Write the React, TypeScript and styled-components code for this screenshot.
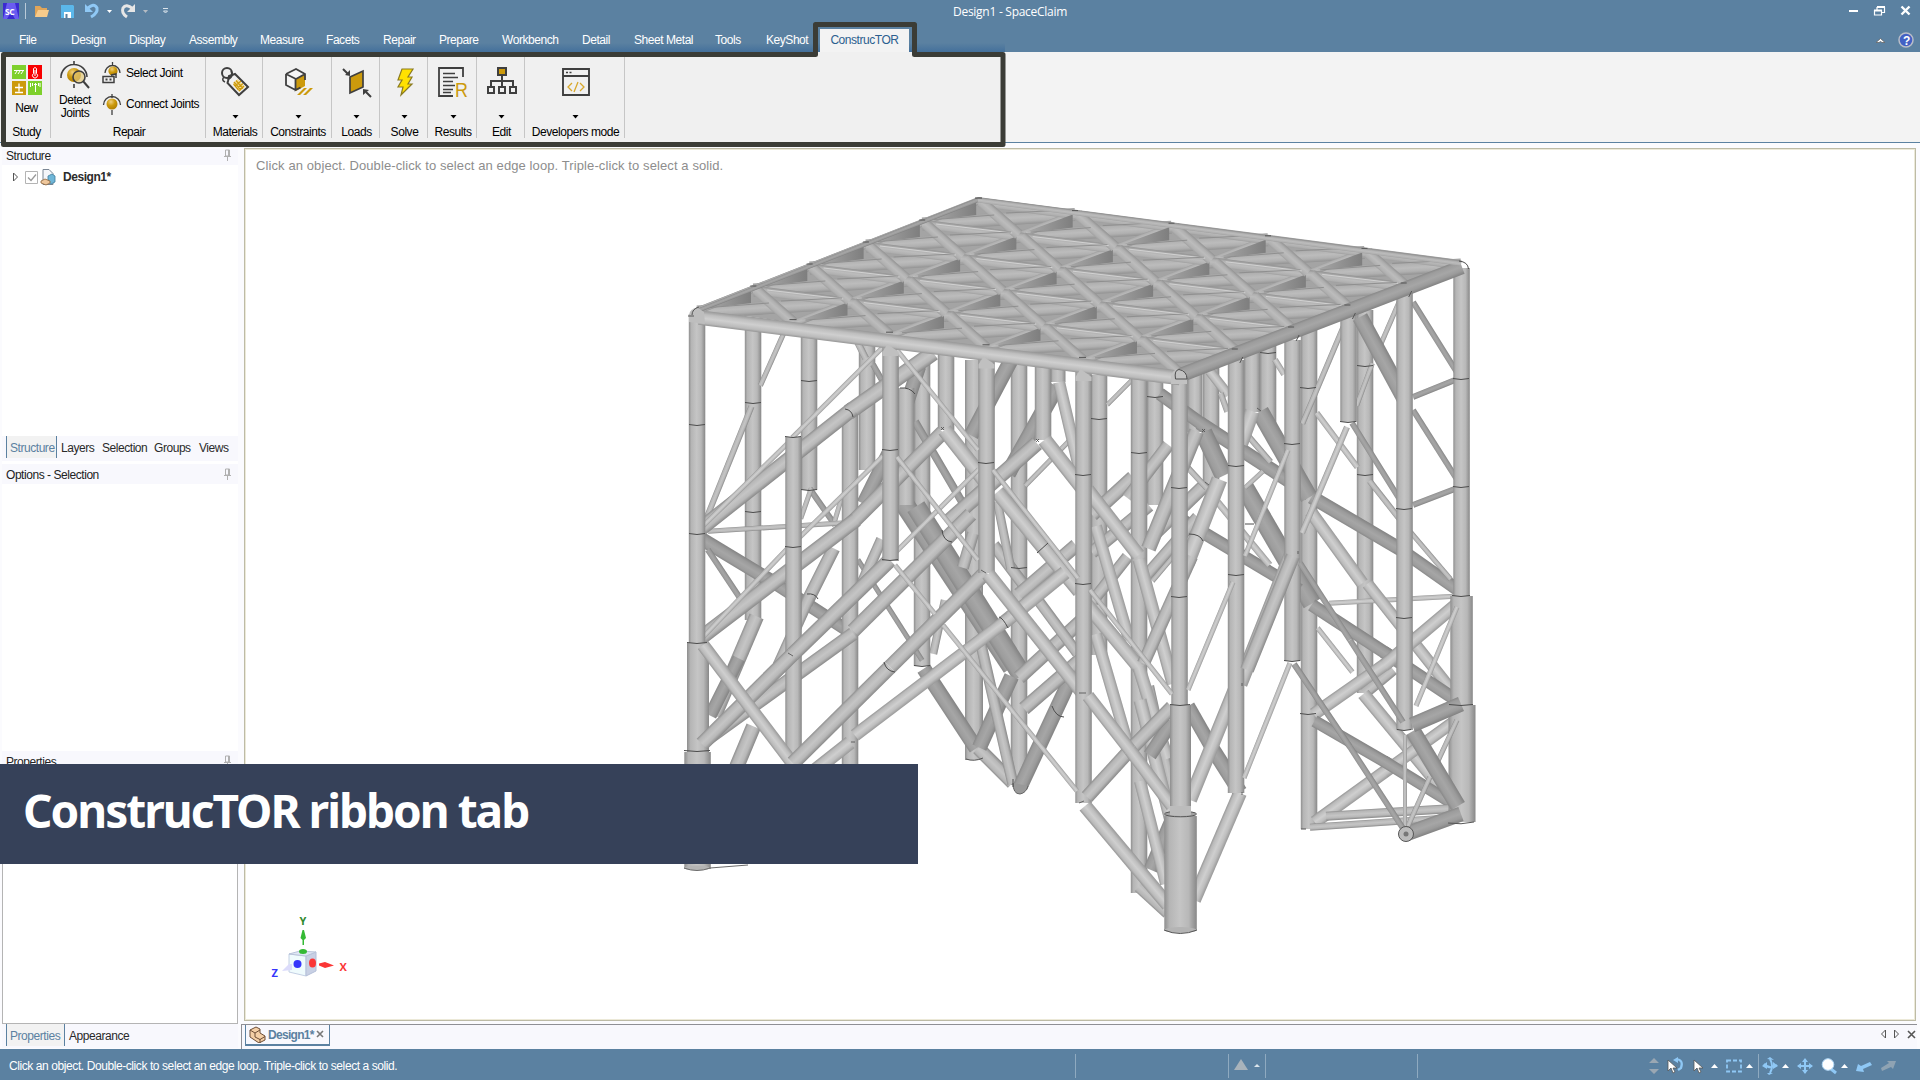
import React from "react";
import styled, { createGlobalStyle } from "styled-components";

const C = {
  blue: "#5b81a1",
  ribbon: "#f0f0f0",
  panel: "#f8f8fd",
  frame: "#3b3c36",
  banner: "#364159",
  gold: "#cc9a0c",
  ink: "#3f3f3f",
};

const GlobalStyle = createGlobalStyle`
  * { box-sizing: border-box; }
  body { margin: 0; background: #f8f8fd; }
  svg { display: block; flex: none; }
`;

const Window = styled.div`
  position: relative;
  width: 1920px;
  height: 1080px;
  display: flex;
  flex-direction: column;
  overflow: hidden;
  font: 12px/14px "Liberation Sans", Arial, sans-serif;
  letter-spacing: -0.45px;
  color: #222;
  background: #fbfbfe;
  white-space: nowrap;
`;

const TitleBar = styled.header`
  height: 26px;
  flex: none;
  display: grid;
  grid-template-columns: 953px 1fr 91px;
  background: ${C.blue};
  color: #fff;
`;
const TitleText = styled.div`
  padding-top: 5px;
  font: 12px/14px "Open Sans", "Noto Sans", sans-serif;
  letter-spacing: -0.27px;
`;
const TabStrip = styled.nav`
  height: 26px;
  flex: none;
  display: flex;
  align-items: stretch;
  background: linear-gradient(${C.blue} 65%, #44709b) 0 0 / 1005px 100% no-repeat, ${C.blue};
  color: #fff;
  padding-left: 19px;
`;
const Tab = styled.div<{ $w: number; $gap?: number }>`
  width: ${(p) => p.$w}px;
  margin-right: ${(p) => p.$gap ?? 23}px;
  padding-top: 7px;
`;
const ActiveTab = styled.div`
  width: 89px;
  margin: 3px auto 0 -10px;
  padding-top: 4px;
  text-align: center;
  background: #f3f3f3;
  color: #2c5f8f;
`;
const TabExtras = styled.div`
  width: 60px;
  padding-top: 6px;
`;

const Ribbon = styled.section`
  height: 91px;
  flex: none;
  display: flex;
  padding: 5px 0 4px 5px;
  border-bottom: 1px solid ${C.blue};
  background: linear-gradient(90deg, ${C.ribbon} 1003px, #f3f3f3 1003px);
  color: #000;
`;
const Group = styled.div<{ $w: number; $shift?: number }>`
  width: ${(p) => p.$w}px;
  height: 81px;
  padding: ${(p) => ((p.$shift ?? 2) < 0 ? "0 2px 0 0" : "0 0 0 2px")};
  border-right: 1px solid #c6c6c6;
  display: flex;
  flex-direction: column;
  align-items: center;
  justify-content: space-between;
`;
const GroupLabel = styled.div`
  height: 13px;
  line-height: 14px;
`;
const IconSlot = styled.div`
  height: 52px;
  padding-top: 9px;
`;
const StudySlot = styled.div`
  height: 60px;
  padding-top: 8px;
  display: flex;
  flex-direction: column;
  align-items: center;
  gap: 6px;
`;
const Big = styled.div`
  display: flex;
  flex-direction: column;
  align-items: center;
  gap: 4px;
  text-align: center;
  line-height: 13px;
`;
const RepairBody = styled.div`
  display: flex;
  width: 100%;
  padding: 3px 0 0 6px;
`;
const JointList = styled.div`
  display: flex;
  flex-direction: column;
  gap: 3px;
  margin-top: -1px;
  padding-left: 11px;
`;
const JointItem = styled.div`
  display: flex;
  align-items: center;
  gap: 4px;
  height: 28px;
`;

const Body = styled.main`
  flex: 1;
  display: grid;
  grid-template-columns: 241px 1fr;
  min-height: 0;
`;
const Side = styled.aside`
  display: flex;
  flex-direction: column;
  padding: 6px 3px 0 2px;
`;
const PanelHead = styled.div<{ $h?: number; $top?: number }>`
  height: ${(p) => p.$h ?? 16}px;
  flex: none;
  display: flex;
  justify-content: space-between;
  padding: ${(p) => p.$top ?? 0}px 6px 0 4px;
  background: ${C.panel};
`;
const Pane = styled.div<{ $h: number; $box?: boolean }>`
  height: ${(p) => p.$h}px;
  flex: none;
  background: #fff;
  border: ${(p) => (p.$box ? "1px solid #b4b4b4" : "none")};
`;
const TreeRow = styled.div`
  display: flex;
  align-items: center;
  height: 23px;
  padding-left: 10px;
  font-weight: bold;
  letter-spacing: -0.45px;
  color: #2b2b2b;
`;
const TreeName = styled.span`
  padding-left: 7px;
`;
const BottomTabs = styled.div<{ $h: number }>`
  height: ${(p) => p.$h}px;
  flex: none;
  display: flex;
  padding-left: 4px;
  background: ${C.panel};
`;
const SideTab = styled.div<{ $w: number; $on?: boolean }>`
  width: ${(p) => p.$w}px;
  height: 22px;
  padding: 5px 0 0 ${(p) => (p.$on ? 3 : 4)}px;
  border: solid ${C.blue};
  border-width: ${(p) => (p.$on ? "0 1px" : "0")};
  background: ${(p) => (p.$on ? "#f2f2f2" : "transparent")};
  color: ${(p) => (p.$on ? C.blue : "#2a2a2a")};
`;

const Stage = styled.section`
  display: flex;
  flex-direction: column;
  padding: 5px 0 0 3px;
`;
const Viewport = styled.div`
  width: 1672px;
  height: 873px;
  flex: none;
  border: 1px solid #bdbba6;
  background: #fff;
  box-shadow: inset 0 0 0 1px #ece9d8;
  padding: 9px 0 0 11px;
  position: relative;
`;
const Hint = styled.div`
  color: #8d8d8d;
  font-size: 13px;
  line-height: 15px;
  letter-spacing: 0.1px;
`;
const Scene = styled.svg`
  position: absolute;
  left: -1px;
  top: -1px;
`;
const DocBar = styled.div`
  height: 25px;
  margin: 3px 3px 0 -3px;
  border-top: 1px solid #8f8f95;
  border-left: 1px solid #8f8f95;
  background: ${C.panel};
  display: flex;
  justify-content: space-between;
  padding: 0 0 0 3px;
`;
const DocTab = styled.div`
  width: 85px;
  height: 21px;
  display: flex;
  align-items: center;
  gap: 2px;
  padding-left: 3px;
  border: solid ${C.blue};
  border-width: 0 1px 2px;
  font-weight: bold;
  letter-spacing: -0.7px;
  color: ${C.blue};
`;
const Status = styled.footer`
  height: 31px;
  flex: none;
  display: grid;
  grid-template-columns: 1075px 153px 37px 152px 1fr;
  background: ${C.blue};
  color: #fff;
`;
const StatusCell = styled.div<{ $line?: boolean; $pad?: number }>`
  margin: 5px 0 2px;
  padding: 5px 0 0 ${(p) => p.$pad ?? 9}px;
  letter-spacing: -0.415px;
  border-left: ${(p) => (p.$line ? "1px solid #8faac0" : "none")};
`;
const Banner = styled.div`
  position: absolute;
  left: 0;
  top: 764px;
  width: 918px;
  height: 100px;
  padding: 15px 0 0 23px;
  background: ${C.banner};
  color: #fff;
  font: bold 46px/62px "Noto Sans", "Open Sans", sans-serif;
  letter-spacing: -2px;
`;
const Overlay = styled.svg`
  position: absolute;
  left: 0;
  top: 0;
  pointer-events: none;
`;

/* ---------- 3D model ---------- */

type Tone = 0 | 1 | 2 | 3; // 0 lit, 1 regular, 2 shaded, 3 soft deck bars
type T = [number, number, number, number, number, Tone?];

const tones = [
  ["#969696", "#bababa", "#cfcfcf", "#bebebe", "#989898"],
  ["#8e8e8e", "#b5b5b5", "#c5c5c5", "#b8b8b8", "#888888"],
  ["#888888", "#9c9c9c", "#a6a6a6", "#9b9b9b", "#828282"],
  ["#a0a0a0", "#b0b0b0", "#bcbcbc", "#b0b0b0", "#939393"],
];

const Tube = ({ t, id, extend = 0 }: { t: T; id: string; extend?: number }) => {
  const [ax, ay, bx, by, w, tone = 1] = t;
  const len = Math.hypot(bx - ax, by - ay);
  const e = ax === bx ? 0 : extend;
  const ux = ((bx - ax) / len) * e;
  const uy = ((by - ay) / len) * e;
  const x1 = ax - ux, y1 = ay - uy, x2 = bx + ux, y2 = by + uy;
  let nx = -(by - ay) / len;
  let ny = (bx - ax) / len;
  if (nx < 0) {
    nx = -nx;
    ny = -ny;
  }
  const h = w / 2;
  const c = tones[tone];
  const p = [
    [x1 - nx * h, y1 - ny * h],
    [x2 - nx * h, y2 - ny * h],
    [x2 + nx * h, y2 + ny * h],
    [x1 + nx * h, y1 + ny * h],
  ];
  return (
    <>
      <linearGradient id={id} gradientUnits="userSpaceOnUse" x1={x1 - nx * h} y1={y1 - ny * h} x2={x1 + nx * h} y2={y1 + ny * h}>
        <stop offset="0" stopColor={c[0]} />
        <stop offset=".16" stopColor={c[1]} />
        <stop offset=".48" stopColor={c[2]} />
        <stop offset=".75" stopColor={c[3]} />
        <stop offset="1" stopColor={c[4]} />
      </linearGradient>
      <polygon points={p.map((q) => q.map((v) => v.toFixed(1)).join(",")).join(" ")} fill={`url(#${id})`} />
    </>
  );
};

const back: T[] = [
  [753, 330, 753, 620, 16.5], [809, 337, 809, 490, 16.5], [867, 345, 867, 470, 16.5], [922, 360, 922, 666, 16.5],
  [974, 360, 974, 760, 18], [1019, 365, 1019, 785, 16.5], [1058, 365, 1058, 382, 15], [1099, 375, 1099, 655, 16.5],
  [1155, 375, 1155, 505, 16.5], [1195, 370, 1195, 432, 15], [1211, 365, 1211, 490, 16.5], [1252, 350, 1252, 412, 16.5],
  [1268, 345, 1268, 428, 16.5], [1309, 330, 1309, 829, 16.5], [1365, 310, 1365, 693, 16.5],
  [783, 335, 762, 382, 5], [750, 410, 707, 517, 6], [858, 343, 864, 355, 7], [875, 368, 883, 382, 6, 2],
  [812, 492, 833, 522, 6, 2], [810, 492, 802, 515, 5], [841, 500, 835, 520, 5], [712, 531, 842, 523, 5],
  [918, 370, 898, 430, 14, 2], [895, 440, 865, 500, 14, 2], [917, 425, 965, 507, 8, 2],
  [1010, 362, 973, 432, 15, 2], [1055, 390, 1010, 470, 16, 2], [1067, 443, 1028, 483, 5],
  [905, 505, 1010, 664, 20, 2], [918, 510, 1020, 672, 20, 2],
  [705, 541, 773, 582, 14, 2], [773, 582, 850, 632, 13, 2], [710, 553, 740, 598, 6, 2],
  [755, 620, 716, 712, 15], [752, 730, 737, 766, 15], [712, 712, 737, 662, 13, 2],
  [832, 552, 808, 600, 13], [808, 600, 780, 662, 12], [860, 563, 920, 657, 5, 2], [880, 543, 862, 583, 11],
  [926, 672, 974, 745, 15, 2], [944, 604, 934, 650, 8], [981, 751, 1010, 780, 14], [1010, 680, 981, 744, 15, 2],
  [980, 640, 1012, 780, 11], [1022, 783, 1070, 680, 15, 2], [1022, 675, 1080, 622, 14], [1027, 706, 1080, 660, 14],
  [996, 548, 1032, 596, 12], [1038, 600, 1075, 650, 11], [1022, 592, 1073, 548, 14], [972, 537, 964, 564, 12],
  [998, 505, 1010, 565, 9],
  [1163, 396, 1203, 425, 13, 2], [1203, 425, 1306, 492, 14, 2], [1205, 436, 1222, 472, 18, 2],
  [1262, 415, 1307, 494, 18, 2], [1246, 490, 1310, 600, 19, 2], [1172, 514, 1296, 588, 13, 2],
  [1203, 487, 1150, 538, 14], [1130, 480, 1095, 512, 14], [1132, 380, 1110, 402, 4.5], [1146, 508, 1095, 550, 13],
  [1166, 448, 1130, 495, 13], [1212, 374, 1226, 392, 10, 0], [1222, 397, 1226, 408, 6],
  [1190, 470, 1204, 485, 6], [1250, 438, 1268, 459, 6], [1277, 363, 1282, 371, 6, 0], [1248, 485, 1260, 474, 5],
  [1220, 505, 1267, 562, 7, 0], [1195, 520, 1145, 577, 12], [1125, 560, 1095, 598, 12],
  [1097, 530, 1128, 636, 12, 0], [1097, 638, 1128, 745, 12, 0], [1150, 690, 1172, 790, 10], [1172, 558, 1155, 578, 5],
];
const mid: T[] = [
  [946, 352, 946, 430, 16.5], [906, 388, 906, 505, 16.5], [1043, 365, 1043, 440, 16.5],
  [1139, 378, 1139, 893, 16.5], [1060, 386, 1080, 472, 12, 0],
  [850, 415, 850, 770, 16.5],
  [930, 355, 852, 410, 16], [850, 411, 704, 526, 15], [787, 444, 705, 524, 5, 0],
  [940, 435, 855, 520, 15], [853, 522, 703, 636, 15], [947, 433, 984, 480, 15, 0],
  [1034, 446, 950, 520, 15], [968, 517, 856, 628, 15], [850, 636, 703, 742, 14],
  [1047, 443, 1088, 495, 15, 0], [1090, 493, 1136, 552, 14, 0], [1140, 563, 1172, 680, 13, 0],
  [1000, 495, 1077, 588, 15, 0], [1088, 606, 1137, 665, 14, 0], [1140, 671, 1166, 755, 13, 0],
  [1062, 575, 1007, 620, 14, 0], [1007, 620, 858, 733, 13, 0], [847, 745, 795, 786, 14, 0],
  [1195, 435, 1150, 545, 15], [1218, 483, 1188, 560, 16, 0], [1251, 415, 1242, 440, 15, 0], [1190, 560, 1145, 660, 13],
  [1141, 704, 1172, 825, 13, 0], [1152, 752, 1170, 725, 14, 2], [1170, 824, 1152, 866, 14, 2], [1142, 889, 1165, 910, 13],
  [1141, 785, 1165, 880, 12, 0],
  [880, 350, 795, 435, 5, 0], [880, 459, 800, 537, 5, 0], [787, 549, 706, 634, 5, 0],
  [976, 472, 897, 551, 5, 0],
  [1313, 515, 1360, 580, 13, 0], [1315, 499, 1400, 549, 14, 2], [1400, 549, 1458, 590, 13, 2],
  [1333, 603, 1460, 596, 5, 0], [1370, 587, 1457, 697, 12, 0], [1315, 607, 1387, 654, 13, 2], [1387, 654, 1459, 702, 13, 2],
  [1320, 631, 1350, 669, 5, 0], [1390, 672, 1367, 691, 12], [1366, 697, 1458, 808, 13, 0],
  [1317, 712, 1387, 663, 13, 0], [1387, 663, 1459, 602, 13, 0], [1318, 723, 1387, 763, 12, 2],
  [1318, 820, 1387, 770, 13, 0], [1387, 770, 1459, 718, 12, 0], [1387, 763, 1460, 808, 12, 2],
  [1330, 816, 1462, 808, 9], [1314, 827, 1462, 817, 7],
  [1345, 323, 1304, 420, 5.5], [1400, 300, 1380, 346, 5], [1371, 367, 1358, 402, 5], [1319, 416, 1355, 464, 6, 0],
  [1372, 484, 1398, 517, 6], [1413, 535, 1448, 576, 5],
];
const front: T[] = [
  [697, 314, 697, 643, 16.5], [698, 643, 698, 752, 22], [697.5, 752, 697.5, 869, 26.5],
  [793.5, 437, 793.5, 770, 16.5], [890, 560, 793, 654, 15], [793, 654, 702, 744, 15], [703, 645, 793, 764, 13, 0],
  [890.5, 345, 890.5, 561, 16.5],
  [986, 572, 890, 667, 15], [890, 667, 793, 763, 15], [986.5, 357, 986.5, 573, 16.5], [988, 574, 1082, 692, 14, 0],
  [1083.5, 368, 1083.5, 803, 16.5],
  [1087, 797, 1130, 750, 14], [1130, 750, 1172, 707, 14], [1088, 696, 1130, 750, 13, 0], [1130, 750, 1172, 806, 13, 0], [1085, 806, 1168, 905, 14, 0],
  [1188, 706, 1212, 748, 14, 2], [1212, 748, 1240, 792, 15, 2],
  [1292, 553, 1240, 684, 15, 0], [1237, 684, 1190, 800, 14, 0], [1240, 793, 1194, 900, 14, 0], [1236, 360, 1236, 793, 16.5],
  [1292.5, 340, 1292.5, 661, 16.5], [1293, 556, 1247, 670, 14],
  [1179.5, 378, 1179.5, 705, 16.5], [1180.500, 705, 1180.500, 814, 21],
  [1348.5, 312, 1348.5, 422, 16.5], [1360, 317, 1405, 400, 16, 2],
  [1413, 302, 1458, 374, 6, 2], [1413, 410, 1458, 481, 6, 2], [1413, 397, 1460, 378, 6, 2], [1413, 505, 1460, 487, 6, 2],
  [1352, 423, 1402, 503, 6, 2], [1347, 427, 1302, 533, 6, 0], [1288, 450, 1245, 556, 5, 0],
  [1290, 663, 1244, 778, 5, 0], [1233, 582, 1188, 690, 5, 0],
  [1404.5, 290, 1404.5, 730, 16.5],
  [1300, 563, 1350, 640, 6, 2], [1350, 640, 1403, 722, 6, 2],
  [1461.500, 268, 1461.500, 596, 16.5], [1461.500, 596, 1461.500, 705, 22.5], [1462, 705, 1462, 822, 27],
  [1457, 607, 1416, 706, 5, 0], [1457, 720, 1437, 763, 5], [1413, 731, 1458, 806, 16, 2], [1412, 725, 1461, 704, 15, 2],
  [1406, 834, 1461, 814, 15, 2], [1430, 777, 1408, 826, 5], [1405, 735, 1405, 833, 4],
  [1294, 664, 1350, 747, 6, 2], [1350, 747, 1406, 833, 6, 2],
  [897, 350, 978, 450, 5, 0], [897, 457, 978, 560, 5, 0], [895, 565, 935, 614, 5, 0], [943, 625, 1077, 791, 5, 0],
  [993, 470, 1078, 578, 5, 0], [1090, 590, 1172, 694, 5, 0],
];

const rings: [number, number, number][] = [
  [697, 425, 8], [697, 534, 8], [697, 643, 10], [697, 751, 13], [753, 403, 8], [753, 512, 8], [809, 381, 8], [809, 490, 8],
  [793, 437, 8], [793, 547, 8], [890, 450, 8], [890, 560, 8], [986, 463, 8], [1083, 475, 8], [1083, 584, 8], [1019, 568, 8],
  [1099, 419, 8], [1139, 453, 8], [1155, 397, 8], [1179, 488, 8], [1179, 597, 8], [1180, 705, 10], [1236, 466, 8], [1236, 575, 8],
  [1268, 353, 8], [1292, 444, 8], [1292, 661, 8], [1308, 388, 8], [1308, 714, 8], [1348, 422, 8], [1365, 366, 8], [1365, 475, 8],
  [1404, 509, 8], [1404, 618, 8], [1404, 730, 7], [1461, 379, 8], [1461, 487, 8], [1461, 596, 9], [1461, 705, 12], [922, 666, 8],
];

const node = (i: number, j: number): [number, number] => [697 + 96.5 * i + 56.3 * j, 308 + 12.6 * i - 22 * j];

const deck: T[] = (() => {
  const out: T[] = [];
  const link = (a: [number, number], b: [number, number], w: number, tone: Tone, dy: number) =>
    out.push([a[0], a[1] + dy, b[0], b[1] + dy, w, tone]);
  for (let j = 4; j >= 0; j--)
    for (let i = 0; i < 5; i++) link(node(i, j), node(i + 1, j + 1), 13, 3, 4);
  for (let i = 0; i <= 4; i++) link(node(i, 0), node(i, 5), 7, 3, 3);
  for (let j = 5; j >= 1; j--) link(node(0, j), node(5, j), 9, 3, 4);
  return out;
})();
const crossBraces: T[] = (() => {
  const out: T[] = [];
  for (let j = 5; j >= 1; j--)
    for (let i = 0; i < 5; i++) {
      const a = node(i, j);
      const b = node(i + 1, j - 1);
      out.push([a[0] + 3, a[1] + 4, b[0], b[1] + 2, 11, 3]);
    }
  return out;
})();
const cells = Array.from({ length: 25 }, (_, k) => [k % 5, Math.floor(k / 5)]);

const tubes = (list: T[], key: string, extend = 0) => list.map((t, i) => <Tube key={i} t={t} id={`${key}${i}`} extend={extend} />);

const Model = () => (
  <g>
    {tubes(back, "bk", 4)}
    {tubes(mid, "md", 4)}
    {tubes(front, "fr")}
    <Tube t={[1180.500, 816, 1180.500, 930, 32.5]} id="leg" />
    <ellipse cx="1180.500" cy="930" rx="16.200" ry="3" fill="#b4b4b4" />
    <ellipse cx="697" cy="868" rx="12.500" ry="2.500" fill="#b4b4b4" />
    <path d="M684 868 Q697 873 710 868 L748 865" fill="none" stroke="#6b6b6b" strokeWidth="1" />
    <ellipse cx="1180.500" cy="814" rx="16" ry="2.800" fill="#a2a2a2" stroke="#555" strokeWidth="1" />
    <path d="M1170 806h21v9q-10 2-21 0z" fill="#bcbcbc" />
    <path d="M1164 930 Q1180 937 1197 930" fill="none" stroke="#555" />
    <path d="M1013 783 Q1013 794 1020 794 Q1026 793 1028 786" fill="#999" stroke="#666" />
    <circle cx="1406" cy="834" r="7.500" fill="#bcbcbc" stroke="#555" strokeWidth="1" />
    <circle cx="1406" cy="834" r="2.500" fill="#777" />
    <path d="M966 759 Q974 762 983 758 M1448 823 Q1461 825 1474 822 M1301 829 L1306 829" stroke="#555" fill="none" />
    <g fill="none" stroke="#4c4c4c" strokeWidth="1">
      {rings.map(([x, y, r], i) => (
        <path key={i} d={`M${x - r} ${y - 0.5} Q${x} ${y + 1.5} ${x + r} ${y - 0.5}`} />
      ))}
      <path d="M845 409 Q852 410 853 417 M900 388 Q910 387 915 394 M942 530 Q943 541 952 542 M884 662 Q886 671 895 672 M999 617 Q1003 618 1008 628 M1037 553 L1048 543 M807 594 Q815 593 818 599 M1189 534 Q1200 534 1203 541 M1245 524 L1254 524 M1052 706 Q1056 717 1064 717 M1013 779 v8" />
      <path strokeOpacity=".8" d="M941 427 l3 3 m0 -3 l-3 3 M1036 439 l3 3 m0 -3 l-3 3 M981 570 l5 3 M1079 693 h7 M1079 803 l5 -2 M1202 429 l3 3 m0 -3 l-3 3 M1257 408 l4 3 M1205 482 l4 3 M1242 683 v3 M1242 792 v3 M1298 551 v3 M851 742 h4 M788 653 l5 3" />
    </g>
    <polygon points="693,309 978,197 1461,260 1180,374" fill="#a4a4a4" />
    {tubes(deck, "dk")}
    <linearGradient id="gap" x1="0" x2="1">
      <stop offset="0" stopColor="#a9a9a9" />
      <stop offset="1" stopColor="#7e7e7e" />
    </linearGradient>
    {cells.map(([i, j], k) => {
      const [x, y] = node(i, j);
      return <polygon key={k} fill="url(#gap)" points={`${x + 8},${y - 1} ${x + 54},${y - 18} ${x + 54},${y - 5} ${x + 30},${y - 2}`} />;
    })}
    {tubes(crossBraces, "cb")}
    <g stroke="#d2d2d2" strokeWidth="1">
      {cells.map(([i, j], k) => {
        const [x, y] = node(i, j + 1);
        return <path key={k} d={`M${x + 14} ${y + 4} L${x + 90} ${y + 13}`} />;
      })}
    </g>
    <g stroke="#8f8f8f" strokeWidth="1">
      {cells.map(([i, j], k) => {
        const [x, y] = node(i, j);
        return <path key={k} d={`M${x + 12} ${y - 0.5} L${x + 72} ${y - 5} M${x + 84} ${y - 7} L${x + 145} ${y - 10}`} />;
      })}
    </g>
    <Tube t={[699, 317.5, 1180, 378, 14.500, 0]} id="edgeF" />
    <Tube t={[1181, 375, 1462, 267, 14.500, 2]} id="edgeR" />
    <Tube t={[697, 311, 978, 200, 4, 2]} id="edgeL" />
    <Tube t={[978, 200, 1461, 263.5, 5, 3]} id="edgeB" />
    <path d="M1171 384 V376 Q1173 369 1179 369 Q1187 371 1187 378 V384 Z" fill="#c2c2c2" />
    <path d="M1175.500 379 Q1174 370 1179 369.500 Q1187 371 1187 379 Z M1459 261 Q1468 262 1468.500 269" fill="none" stroke="#4c4c4c" />
    <path d="M689 322 V315 Q690 308 698 308 L704 312 L705 324 Z" fill="#bebebe" />
    <path d="M692 315 Q692 309 699 307 M688 316 h6" fill="none" stroke="#555" />
    {[1, 2, 3, 4].map((i) => (
      <path
        key={i}
        fill="none"
        stroke="#555"
        d={`M${node(i, 0)[0] - 4} ${node(i, 0)[1] - 1} h7 M${node(0, i)[0] - 3} ${node(0, i)[1]} h6 M${node(i, 5)[0] - 3} ${node(i, 5)[1]} h6 M${node(5, i)[0] - 4} ${node(5, i)[1]} h6 M${node(5, i)[0] + 7} ${node(5, i)[1] + 8} l-3 6`}
      />
    ))}
    <path d="M975 198 h7" stroke="#444" />
    {[890.5, 986.5, 1083.5].map((x, i) => (
      <path key={x} d={`M${x - 8} ${352 + i * 12.5} L${x - 3} ${344 + i * 12.5} L${x + 8} ${352 + i * 12.5} V${356 + i * 12.5} H${x - 8} Z`} fill="#c0c0c0" />
    ))}
  </g>
);

const Triad = () => (
  <g fontFamily="Open Sans, sans-serif" fontSize="11" fontWeight="700">
    <path d="M289 954 L306 956 V976 L289 972 Z" fill="#effbfd" stroke="#c4d0e4" />
    <path d="M306 956 L316 952 V971 L306 976 Z" fill="#c8d0e4" stroke="#b4bfd8" />
    <path d="M289 954 L300 951 L316 952 L306 956 Z" fill="#dfe6f4" stroke="#b9c4da" />
    <path d="M282 971 L289 964 L292 964 V970 Z" fill="#dcdcfb" />
    <ellipse cx="303" cy="951.500" rx="4" ry="2.500" fill="#35ba35" />
    <circle cx="297.500" cy="964" r="4" fill="#3636fb" />
    <ellipse cx="312.500" cy="963" rx="3.500" ry="4.500" fill="#fb3636" />
    <path d="M302.500 930h1.500l2 8-2 2v5h-1.500v-5l-2-2z" fill="#35ba35" />
    <path d="M319 963.500L325 962 334 965.500 325 968 319 965.500 Z" fill="#fb3636" />
    <text x="299.500" y="925" fill="#2f8a2f">Y</text>
    <text x="339.500" y="971" fill="#fb3636">X</text>
    <text x="271.500" y="977" fill="#3636fb">Z</text>
  </g>
);

/* ---------- icons ---------- */

const Caret = () => (
  <svg width="7" height="4"><path d="M0.500 0h6l-3 3.500z" fill="#000" /></svg>
);
const Pin = () => (
  <svg width="9" height="12"><path d="M2.500 1h4v6h-4zM5.500 1v6M1 7.500h7M4.500 8v4" fill="none" stroke="#b0b0b0" /></svg>
);

const QuickAccess = () => (
  <svg width="200" height="26">
    <rect x="3" y="3" width="16" height="16" fill="#3a2bd0" />
    <path d="M7 3h8l4 16h-4l-4-7-4 7H3z" fill="#6a5cf0" />
    <text x="5" y="14.500" fontFamily="Open Sans" fontWeight="700" fontSize="8.500" fill="#fff">SC</text>
    <path d="M25.500 3v16" stroke="#b9cad8" />
    <path d="M35 17V6h5l2 2h5v9z" fill="#dfa55a" /><path d="M35 17l3-7h11l-2 7z" fill="#f7cb8b" />
    <path d="M61 5h12l1 1v12H61z" fill="#5bb7ea" /><path d="M64 12h7v6h-7z" fill="#fff" /><path d="M65.500 14h2v4h-2z" fill="#5b81a1" />
    <path d="M87 9 Q94 2 97 8 Q98 13 91 17" fill="none" stroke="#8fc8f5" strokeWidth="3" /><path d="M85 4v8h8z" fill="#8fc8f5" />
    <path d="M107 10h5l-2.500 3z" fill="#fff" />
    <path d="M133 9 Q126 3 123 8 Q121 13 127 17" fill="none" stroke="#e6e6e6" strokeWidth="3" /><path d="M135 4v8h-8z" fill="#e6e6e6" />
    <path d="M143 10h5l-2.500 3z" fill="#b5bcc4" />
    <path d="M163 8.500h5M163.500 11h4l-2 2z" stroke="#dbe4ec" fill="none" />
  </svg>
);
const WindowButtons = () => (
  <svg width="91" height="26" fill="none" stroke="#fff">
    <path d="M20 11h9" strokeWidth="2" />
    <path d="M45.500 10.500h7v4.500h-7zM48 10V7.500h7.500v5H53" strokeWidth="1.200" /><path d="M45 10.500h8M48 7h8" strokeWidth="2" />
    <path d="M72.500 6.500l8 8M80.500 6.500l-8 8" strokeWidth="2.400" />
  </svg>
);
const HelpIcons = () => (
  <svg width="56" height="20">
    <path d="M16 10.500l4.500-4 4.500 4h-3l-1.500-1-1.500 1z" fill="#fff" stroke="#666" strokeWidth=".8" />
    <circle cx="46" cy="8" r="7" fill="#4361c4" stroke="#b9bdc8" strokeWidth="1.500" />
    <text x="43" y="12.500" fontSize="12" fontWeight="700" fill="#fff">?</text>
  </svg>
);
const StudyIcon = () => (
  <svg width="30" height="30">
    <path fill="#7ed02c" d="M0 0h14v14H0zM16 16h14v14H16z" /><path fill="#f80000" d="M16 0h14v14H16z" /><path fill={C.gold} d="M0 16h14v14H0z" />
    <g fill="none" stroke="#fff">
      <path d="M2 5.500h10M5 6l-2 3M8 6l-2 3M11 6l-2 3" />
      <path d="M21.500 8.500V3.500q1.500-2 3 0v5a2.500 2.500 0 1 1-3 0zM23 5v6" />
      <path d="M3 22.500h8M7 18.500v8M3 27.500h8" strokeWidth="1.300" />
      <path d="M18.500 18v4M20.500 18v3M23.500 18v9M26.500 18v3M28 18v4M22 19.500h3" />
    </g>
  </svg>
);
const Ball = ({ id, cx, cy, r }: { id: string; cx: number; cy: number; r: number }) => (
  <>
    <radialGradient id={id} cx=".4" cy=".3" r=".8"><stop offset="0" stopColor="#f0d080" /><stop offset=".45" stopColor="#cc9a0c" /><stop offset="1" stopColor="#a87800" /></radialGradient>
    <circle cx={cx} cy={cy} r={r} fill={`url(#${id})`} />
  </>
);
const DetectIcon = () => (
  <svg width="32" height="30">
    <path d="M2 18A13 13 0 0 1 28 17M15 1v4M15 24v4" fill="none" stroke={C.ink} strokeWidth="1.600" />
    <Ball id="b1" cx={15} cy={15} r={7} />
    <circle cx="20" cy="17" r="6" fill="#e3c878" fillOpacity=".7" stroke={C.ink} strokeWidth="1.600" />
    <path d="M24 21l6 7" stroke={C.ink} strokeWidth="2" />
  </svg>
);
const SelectIcon = () => (
  <svg width="20" height="22">
    <path d="M3 11A7.500 7.500 0 0 1 18 11M10.500 0v4" fill="none" stroke={C.ink} strokeWidth="1.300" />
    <Ball id="b2" cx={11} cy={9} r={4.6} />
    <path d="M1 14.500h11v6H1zM9 13l5-1v4" fill="#f0f0f0" stroke={C.ink} strokeWidth="1.500" /><path d="M3.500 17.500h2M7.500 17.500h2" stroke={C.ink} strokeWidth="2" />
  </svg>
);
const ConnectIcon = () => (
  <svg width="20" height="22">
    <path d="M1.500 12A8.500 8.500 0 0 1 18.500 12M10 1v4M10 17v5" fill="none" stroke={C.ink} strokeWidth="1.300" />
    <Ball id="b3" cx={10} cy={11} r={5.5} />
  </svg>
);
const MaterialsIcon = () => (
  <svg width="32" height="32" fill="none" stroke={C.ink} strokeWidth="2">
    <path d="M9 15l1-5 6-2 13 13-9 8L8.500 17z" /><circle cx="8" cy="7" r="5" /><path d="M5 11q-3 3 1 5M10 13q5-3 2-8" strokeWidth="1.500" />
    <path d="M14 17l5-4 7 8-6 5z" fill="#f3dc9c" stroke="none" />
    <path d="M15 16l7 8M17 14.500l7 8M14.500 18l5 6M16 20l6-5M18 22.500l6-5M20 25l5-5" stroke={C.gold} strokeWidth="1.200" />
  </svg>
);
const ConstraintsIcon = () => (
  <svg width="30" height="32">
    <path d="M3 8l10-5 9 5v12l-10 5-9-5z" fill="#f5f5f5" /><path d="M13 13l9-5v12l-9 5z" fill={C.gold} />
    <path d="M3 8l10-5 9 5v6M3 8v11l9.500 5M3 8l10 5 9-5M12.500 13v11l5-2.500" fill="none" stroke={C.ink} strokeWidth="1.800" />
    <path d="M14 29l7-7h3l-7 7zM20 29l7-7h3l-7 7z" fill={C.gold} />
  </svg>
);
const LoadsIcon = () => (
  <svg width="30" height="32">
    <path d="M8 11l13-6v16L8 27z" fill={C.gold} stroke={C.ink} strokeWidth="1.700" />
    <path d="M1 3l5 5M29 31l-5-5" stroke={C.ink} strokeWidth="2" /><path d="M8 10V4L3 9zM21 23v6l6-5z" fill={C.ink} />
  </svg>
);
const SolveIcon = () => (
  <svg width="20" height="32"><path d="M7 3h11l-5 8h4l-4 7h4L6 29l2-8H3l4-7H3z" fill="#ffe100" stroke="#8a7a20" strokeWidth="1.200" /></svg>
);
const ResultsIcon = () => (
  <svg width="32" height="38">
    <path d="M26 11V2H2v28h14" fill="none" stroke={C.ink} strokeWidth="1.800" />
    <path d="M6 7.500h12M6 11.500h15M6 15.500h10M6 19.500h12M6 23.500h10M6 26.500h8" stroke={C.ink} strokeWidth="1.700" />
    <text x="18" y="30.500" fontSize="21" fill={C.gold} textLength="12.500" lengthAdjust="spacingAndGlyphs">R</text>
  </svg>
);
const EditIcon = () => (
  <svg width="30" height="32" fill="none" stroke={C.ink} strokeWidth="2">
    <path d="M11 2h8v7h-8z" fill={C.gold} /><path d="M15 9v12M4 21v-6h22v6" /><path d="M1 21h6v6H1zM12 21h6v6h-6zM23 21h6v6h-6z" />
  </svg>
);
const DevIcon = () => (
  <svg width="30" height="32">
    <path d="M2 3h26v26H2zM2 10h26" fill="none" stroke={C.ink} strokeWidth="1.900" /><path d="M5 6.500h2M8.500 6.500h2" stroke={C.ink} strokeWidth="1.500" />
    <path d="M11 17l-4 4 4 4M19 17l4 4-4 4M17 16l-4 10" fill="none" stroke="#d8a82c" strokeWidth="1.300" />
  </svg>
);
const TreeIcons = () => (
  <svg width="44" height="18">
    <path d="M1.500 5v8l4-4z" fill="none" stroke="#555" />
    <path d="M13.500 3.500h12v12h-12z" fill="#fff" stroke="#b4b4b4" /><path d="M16 9.500l3 3 5-6" fill="none" stroke="#999" strokeWidth="1.300" />
    <path d="M31 1.500h6l4 4v11H31z" fill="#f4f6fa" stroke="#7b8795" /><path d="M36 8l4-2 3 2v6l-4 2-3-2z" fill="#6fb6d8" stroke="#3d7c9c" strokeWidth=".8" />
    <path d="M29 13l4-2 5 2v2l-4 2-5-2z" fill="#efc79c" stroke="#8a6238" strokeWidth=".8" />
  </svg>
);
const PartIcon = () => (
  <svg width="17" height="17"><path d="M1 4l6-3 4 2v4l5 3v4l-6 3-9-6z" fill="#f4cfa6" stroke="#6d4d36" /><path d="M1 4l5 3v4l5 2.500 5-3M6 7l5-3M11 13v4" fill="none" stroke="#6d4d36" /></svg>
);
const DocNav = () => (
  <svg width="40" height="20" fill="none" stroke="#555"><path d="M8.500 5v8l-4-4zM17.500 5v8l4-4z" /><path d="M31 6l7 7M38 6l-7 7" strokeWidth="1.600" /></svg>
);
const StatusTools = () => (
  <svg width="503" height="31">
    <g transform="translate(-1417 -1049)">
      <path d="M1417.500 1054v24" stroke="#8faac0" />
      <path d="M1649 1063l5-5 5 5zM1649 1069l5 5 5-5z" fill="#9aa7b3" />
      <path d="M1668 1060v11l3-3 2 5 2-1-2-4h4z" fill="#fff" stroke="#555" strokeWidth=".8" /><path d="M1676 1059q8 1 5 9l-3 2" fill="none" stroke="#8fc8f5" strokeWidth="2.200" /><path d="M1673 1060l5-3v6z" fill="#8fc8f5" />
      <path d="M1694 1060v11l3-3 2 5 2-1-2-4h4z" fill="#fff" stroke="#555" strokeWidth=".8" />
      <path d="M1711 1068l3.500-4 3.500 4zM1746 1068l3.500-4 3.500 4zM1782 1068l3.500-4 3.500 4zM1841 1068l3.500-4 3.500 4z" fill="#fff" />
      <path d="M1727 1060.500h14v11h-14z" fill="none" stroke="#8fc8f5" strokeWidth="1.800" strokeDasharray="4 2" />
      <path d="M1758.500 1054v24" stroke="#8faac0" />
      <g fill="none" stroke="#8fc8f5" strokeWidth="2">
        <path d="M1770 1059q4 7 0 14M1764 1064q6 6 13 1" /><path d="M1798 1066h14M1805 1059v14" />
      </g>
      <path d="M1762 1066l5-4v7zM1778 1066l-5-4v7zM1767 1059l3-2 4 3zM1767 1073h6l-4 2zM1797 1066l4-3v6zM1813 1066l-4-3v6zM1805 1058l-3 4h6zM1805 1074l-3-4h6z" fill="#8fc8f5" />
      <path d="M1831 1069l5 4" stroke="#8fc8f5" strokeWidth="3" /><circle cx="1828" cy="1064.500" r="5.800" fill="#fff" stroke="#b5dcfb" />
      <path d="M1856 1071l2-7 3 2 9-4 2 3-9 4 1 3z" fill="#8fc8f5" /><path d="M1896 1061l-9 0 2 2-8 5 1 3 9-4 2 2z" fill="#8fa3b3" />
    </g>
  </svg>
);

const tabs: [string, number, number?][] = [
  ["File", 20, 32], ["Design", 35], ["Display", 37], ["Assembly", 49, 22], ["Measure", 43], ["Facets", 34], ["Repair", 33], ["Prepare", 40],
  ["Workbench", 56, 24], ["Detail", 29], ["Sheet Metal", 58], ["Tools", 28], ["KeyShot", 41],
];
const groups: [string, number, React.FC][] = [
  ["Materials", 57, MaterialsIcon], ["Constraints", 69, ConstraintsIcon], ["Loads", 48, LoadsIcon], ["Solve", 48, SolveIcon],
  ["Results", 49, ResultsIcon], ["Edit", 48, EditIcon], ["Developers mode", 100, DevIcon],
];
const hint = "Click an object. Double-click to select an edge loop. Triple-click to select a solid.";

export default function App() {
  return (
    <Window>
      <GlobalStyle />
      <TitleBar>
        <QuickAccess />
        <TitleText>Design1 - SpaceClaim</TitleText>
        <WindowButtons />
      </TitleBar>
      <TabStrip>
        {tabs.map(([name, w, gap]) => (
          <Tab key={name} $w={w} $gap={gap}>{name}</Tab>
        ))}
        <ActiveTab>ConstrucTOR</ActiveTab>
        <TabExtras><HelpIcons /></TabExtras>
      </TabStrip>
      <Ribbon>
        <Group $w={46} $shift={-2}>
          <StudySlot><StudyIcon />New</StudySlot>
          <GroupLabel>Study</GroupLabel>
        </Group>
        <Group $w={155}>
          <RepairBody>
            <Big><DetectIcon /><span>Detect<br />Joints</span></Big>
            <JointList>
              <JointItem><SelectIcon />Select Joint</JointItem>
              <JointItem><ConnectIcon />Connect Joints</JointItem>
            </JointList>
          </RepairBody>
          <GroupLabel>Repair</GroupLabel>
        </Group>
        {groups.map(([name, w, Icon]) => (
          <Group key={name} $w={w}>
            <IconSlot><Icon /></IconSlot>
            <Caret />
            <GroupLabel>{name}</GroupLabel>
          </Group>
        ))}
      </Ribbon>
      <Body>
        <Side>
          <PanelHead>Structure<Pin /></PanelHead>
          <Pane $h={271}><TreeRow><TreeIcons /><TreeName>Design1*</TreeName></TreeRow></Pane>
          <BottomTabs $h={25}>
            <SideTab $w={51} $on>Structure</SideTab>
            <SideTab $w={41}>Layers</SideTab>
            <SideTab $w={52}>Selection</SideTab>
            <SideTab $w={45}>Groups</SideTab>
            <SideTab $w={40}>Views</SideTab>
          </BottomTabs>
          <Pane $h={3} />
          <PanelHead $h={20} $top={4}>Options - Selection<Pin /></PanelHead>
          <Pane $h={267} />
          <PanelHead $h={20} $top={4}>Properties<Pin /></PanelHead>
          <Pane $h={253} $box />
          <BottomTabs $h={24}>
            <SideTab $w={59} $on>Properties</SideTab>
            <SideTab $w={70}>Appearance</SideTab>
          </BottomTabs>
        </Side>
        <Stage>
          <Viewport>
            <Hint>{hint}</Hint>
            <Scene width="1670" height="871" viewBox="244 148 1670 871">
              <Model />
              <Triad />
            </Scene>
          </Viewport>
          <DocBar>
            <DocTab>
              <PartIcon />Design1*
              <svg width="9" height="9"><path d="M1 1l6 6M7 1l-6 6" stroke="#777" strokeWidth="1.600" /></svg>
            </DocTab>
            <DocNav />
          </DocBar>
        </Stage>
      </Body>
      <Status>
        <StatusCell>{hint}</StatusCell>
        <StatusCell $line />
        <StatusCell $line $pad={5}>
          <svg width="30" height="14"><path d="M0 11l7-11 7 11z" fill="#a9b3bb" /><path d="M20 8l3-3 3 3z" fill="#dce5ec" /></svg>
        </StatusCell>
        <StatusCell $line />
        <StatusTools />
      </Status>
      <Overlay width="1920" height="160">
        <defs><filter id="soft" x="-5%" y="-30%" width="110%" height="160%"><feGaussianBlur stdDeviation="3" /></filter></defs>
        <path d="M3.500 54.500 H815.500 V24.500 H914.500 V54.500 H1003" fill="none" stroke="#1d4b7a" strokeOpacity=".45" strokeWidth="6" filter="url(#soft)" clipPath="inset(0 0 95px 0)" />
        <path d="M3.500 54.500 H815.500 V24.500 H914.500 V54.500 H1003 V144.500 H3.500 Z" fill="none" stroke={C.frame} strokeWidth="5" strokeLinejoin="round" />
      </Overlay>
      <Banner>ConstrucTOR ribbon tab</Banner>
    </Window>
  );
}
